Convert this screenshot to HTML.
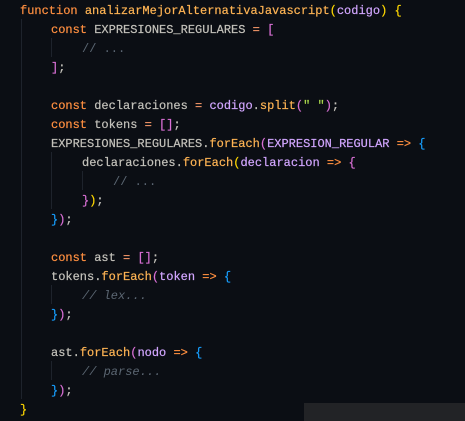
<!DOCTYPE html>
<html><head><meta charset="utf-8"><style>
html,body{margin:0;padding:0;background:#0b0e14;width:465px;height:421px;overflow:hidden;position:relative}
.code{position:absolute;left:20px;top:2px;font-family:"Liberation Mono",monospace;font-size:12px;line-height:19px;color:#c4c2bb;-webkit-text-stroke:0.2px}
.l{height:19px;white-space:pre}
.i1{padding-left:31px}.i2{padding-left:62px}.i3{padding-left:93px}
.k{color:#ff8f40}.f{color:#ffb454}.p{color:#d2a6ff}.s{color:#aad94c}
.c{color:#5c6773;font-style:italic;-webkit-text-stroke:0}.o{color:#f29668}
.y{color:#ffd700}.m{color:#da70d6}.b{color:#179fff}
.g{position:absolute;width:1px;background:#1e232c}
.box{position:absolute;left:304px;top:403px;width:161px;height:18px;background:#222326}
</style></head><body>
<div class="g" style="left:21px;top:19px;height:380px"></div>
<div class="g" style="left:51px;top:38px;height:19px"></div>
<div class="g" style="left:51px;top:152px;height:57px"></div>
<div class="g" style="left:82px;top:171px;height:19px"></div>
<div class="g" style="left:51px;top:285px;height:19px"></div>
<div class="g" style="left:51px;top:361px;height:19px"></div>
<div class="code"><div class="l"><span class="k">function</span> <span class="f">analizarMejorAlternativaJavascript</span><span class="y">(</span><span class="p">codigo</span><span class="y">)</span> <span class="y">{</span></div><div class="l i1"><span class="k">const</span> EXPRESIONES_REGULARES <span class="o">=</span> <span class="m">[</span></div><div class="l i2"><span class="c" style="font-style:normal">// ...</span></div><div class="l i1"><span class="m">]</span>;</div><div class="l"></div><div class="l i1"><span class="k">const</span> declaraciones <span class="o">=</span> <span class="p">codigo</span>.<span class="f">split</span><span class="m">(</span><span class="s">" "</span><span class="m">)</span>;</div><div class="l i1"><span class="k">const</span> tokens <span class="o">=</span> <span class="m">[]</span>;</div><div class="l i1">EXPRESIONES_REGULARES.<span class="f">forEach</span><span class="m">(</span><span class="p">EXPRESION_REGULAR</span> <span class="k">=&gt;</span> <span class="b">{</span></div><div class="l i2">declaraciones.<span class="f">forEach</span><span class="y">(</span><span class="p">declaracion</span> <span class="k">=&gt;</span> <span class="m">{</span></div><div class="l i3"><span class="c" style="font-style:normal">// ...</span></div><div class="l i2"><span class="m">}</span><span class="y">)</span>;</div><div class="l i1"><span class="b">}</span><span class="m">)</span>;</div><div class="l"></div><div class="l i1"><span class="k">const</span> ast <span class="o">=</span> <span class="m">[]</span>;</div><div class="l i1">tokens.<span class="f">forEach</span><span class="m">(</span><span class="p">token</span> <span class="k">=&gt;</span> <span class="b">{</span></div><div class="l i2"><span class="c">// lex...</span></div><div class="l i1"><span class="b">}</span><span class="m">)</span>;</div><div class="l"></div><div class="l i1">ast.<span class="f">forEach</span><span class="m">(</span><span class="p">nodo</span> <span class="k">=&gt;</span> <span class="b">{</span></div><div class="l i2"><span class="c">// parse...</span></div><div class="l i1"><span class="b">}</span><span class="m">)</span>;</div><div class="l"><span class="y">}</span></div></div>
<div class="box"></div>
</body></html>
